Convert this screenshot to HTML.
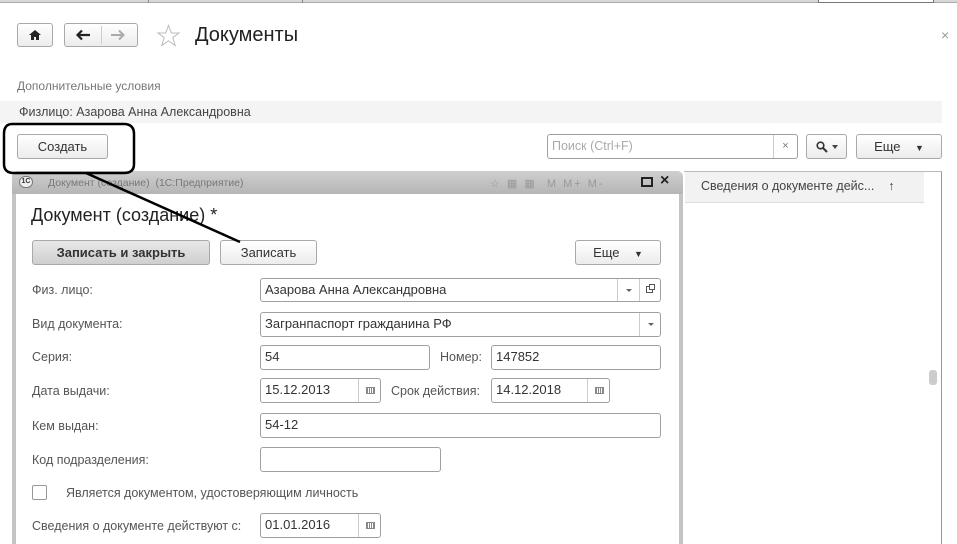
<!DOCTYPE html>
<html><head><meta charset="utf-8">
<style>
*{box-sizing:border-box;margin:0;padding:0}
html{overflow:hidden;width:957px;height:544px}
body{width:957px;height:544px;overflow:hidden;background:#fff;font-family:"Liberation Sans",sans-serif;font-size:12px;color:#333;position:relative}
.a{position:absolute}
.btn{position:absolute;border:1px solid #a9a9a9;border-radius:3px;background:linear-gradient(#fff,#ececec);text-align:center;color:#333;font-size:13px}
.fld{position:absolute;border:1px solid #a0a0a0;border-radius:3px;background:#fff;font-size:13px;color:#333;padding-left:4px;line-height:22px}
.lbl{position:absolute;font-size:12.5px;color:#555}
.sb{position:absolute;top:0;bottom:0;border-left:1px solid #ccc;width:22px}
.cal{position:absolute;width:9px;height:7px;border:1px solid #888;left:7px;top:8px;background:repeating-linear-gradient(90deg,#888 0 1px,#fff 1px 2px)}
.dd{position:absolute;left:8px;top:10px;width:0;height:0;border-left:3px solid transparent;border-right:3px solid transparent;border-top:3px solid #666}
</style></head><body>
<div class="a" style="left:0;top:0;width:957px;height:3px;background:#d8d8d8;border-bottom:1px solid #aaa"></div>
<div class="a" style="left:148px;top:0;width:1px;height:3px;background:#888"></div>
<div class="a" style="left:302px;top:0;width:1px;height:3px;background:#888"></div>
<div class="a" style="left:818px;top:0;width:116px;height:3px;background:#fff;border:1px solid #777;border-top:0"></div>

<div class="btn" style="left:17px;top:23px;width:36px;height:24px"><svg width="14" height="12" viewBox="0 0 14 12" style="margin-top:5px"><path d="M1 6L7 1L13 6H11V11H8V8H6V11H3V6Z" fill="#222"/></svg></div>
<div class="btn" style="left:64px;top:23px;width:74px;height:24px"></div>
<div class="a" style="left:101px;top:26px;width:1px;height:18px;background:#ccc"></div>
<svg class="a" style="left:75px;top:29px" width="16" height="12" viewBox="0 0 16 12"><path d="M15 6H3M7 1.5L2.5 6L7 10.5" fill="none" stroke="#222" stroke-width="2.2"/></svg>
<svg class="a" style="left:110px;top:29px" width="16" height="12" viewBox="0 0 16 12"><path d="M1 6H13M9 1.5L13.5 6L9 10.5" fill="none" stroke="#aaa" stroke-width="2"/></svg>
<svg class="a" style="left:156px;top:24px" width="25" height="24" viewBox="0 0 25 24"><path d="M12.5 1.5L15.3 9H23L16.8 13.6L19.2 21.5L12.5 16.8L5.8 21.5L8.2 13.6L2 9H9.7Z" fill="none" stroke="#bbb" stroke-width="1"/></svg>
<div class="a" style="left:195px;top:24px;font-size:20px;color:#222">Документы</div>
<div class="a" style="left:941px;top:27px;font-size:14px;color:#999">×</div>

<div class="a" style="left:17px;top:79px;font-size:12px;color:#777">Дополнительные условия</div>
<div class="a" style="left:0;top:101px;width:942px;height:22px;background:#f4f4f4"></div>
<div class="a" style="left:19px;top:105px;font-size:12.5px;color:#444">Физлицо: Азарова Анна Александровна</div>

<div class="btn" style="left:17px;top:134px;width:91px;height:25px;line-height:23px">Создать</div>
<div class="fld" style="left:547px;top:134px;width:251px;height:25px;color:#aaa;font-size:12.5px">Поиск (Ctrl+F)<div class="sb" style="right:0;left:auto;color:#777;text-align:center;font-size:11px;width:24px">×</div></div>
<div class="btn" style="left:806px;top:134px;width:41px;height:25px"><svg class="a" style="left:9px;top:6px" width="12" height="12" viewBox="0 0 12 12"><circle cx="4.5" cy="4.5" r="3.3" fill="none" stroke="#333" stroke-width="1.6"/><path d="M7 7L11 11" stroke="#333" stroke-width="2"/></svg><div class="a" style="left:25px;top:10px;border-left:3.5px solid transparent;border-right:3.5px solid transparent;border-top:4px solid #444"></div></div>
<div class="btn" style="left:856px;top:134px;width:86px;height:25px;line-height:23px">Еще &nbsp;&nbsp;&nbsp;<span style="font-size:9px">▼</span></div>

<!-- right panel -->
<div class="a" style="left:684px;top:171px;width:258px;height:373px;border-right:1px solid #999;border-top:1px solid #bbb;background:#fff"></div>
<div class="a" style="left:685px;top:172px;width:239px;height:31px;background:#f2f2f2;border-bottom:1px solid #ddd"></div>
<div class="a" style="left:701px;top:179px;font-size:12.5px;color:#444">Сведения о документе дейс...&nbsp;&nbsp;&nbsp;&nbsp;↑</div>
<div class="a" style="left:929px;top:370px;width:8px;height:15px;background:#ccc;border-radius:3px"></div>

<!-- dialog -->
<div class="a" style="left:12px;top:171px;width:671px;height:373px;background:#fff;border:4px solid #c4c4c4;border-top:0;border-bottom:0;border-radius:6px 6px 0 0"></div>
<div class="a" style="left:12px;top:171px;width:671px;height:23px;background:linear-gradient(#cfcfcf,#b5b5b5);border-radius:6px 6px 0 0"></div>
<div class="a" style="left:19px;top:176px;width:14px;height:12px;border-radius:6px;background:#eee;border:1px solid #777;font-size:7px;line-height:10px;text-align:center;font-weight:bold">1С</div>
<div class="a" style="left:48px;top:177px;font-size:10.5px;color:#777">Документ (создание) &nbsp;(1С:Предприятие)</div>
<div class="a" style="left:490px;top:177px;font-size:11px;color:#999;letter-spacing:2px">☆ ▦ ▦ &nbsp;M M+ M-</div>
<div class="a" style="left:641px;top:177px;width:12px;height:10px;border:2px solid #222;border-top-width:2px"></div>
<div class="a" style="left:660px;top:172px;font-size:16px;font-weight:bold;color:#222">×</div>

<div class="a" style="left:31px;top:205px;font-size:18px;color:#222">Документ (создание) *</div>
<div class="btn" style="left:32px;top:240px;width:178px;height:25px;line-height:23px;font-weight:bold;background:linear-gradient(#e8e8e8,#cfcfcf);color:#333">Записать и закрыть</div>
<div class="btn" style="left:220px;top:240px;width:97px;height:25px;line-height:23px">Записать</div>
<div class="btn" style="left:575px;top:240px;width:86px;height:25px;line-height:23px">Еще &nbsp;&nbsp;&nbsp;<span style="font-size:9px">▼</span></div>

<div class="lbl" style="left:32px;top:283px">Физ. лицо:</div>
<div class="fld" style="left:260px;top:278px;width:401px;height:24px">Азарова Анна Александровна<div class="sb" style="left:356px"><div class="dd"></div></div><div class="sb" style="left:378px"><div class="a" style="left:6px;top:7px;width:7px;height:7px;border:1px solid #555"></div><div class="a" style="left:9px;top:5px;width:6px;height:6px;border:1px solid #555;background:#fff"></div></div></div>
<div class="lbl" style="left:32px;top:317px">Вид документа:</div>
<div class="fld" style="left:260px;top:312px;width:401px;height:25px">Загранпаспорт гражданина РФ<div class="sb" style="left:378px"><div class="dd"></div></div></div>
<div class="lbl" style="left:32px;top:350px">Серия:</div>
<div class="fld" style="left:260px;top:345px;width:170px;height:25px">54</div>
<div class="lbl" style="left:440px;top:350px">Номер:</div>
<div class="fld" style="left:491px;top:345px;width:170px;height:25px">147852</div>
<div class="lbl" style="left:32px;top:384px">Дата выдачи:</div>
<div class="fld" style="left:260px;top:378px;width:121px;height:25px">15.12.2013<div class="sb" style="left:97px"><div class="cal"></div></div></div>
<div class="lbl" style="left:391px;top:384px">Срок действия:</div>
<div class="fld" style="left:491px;top:378px;width:119px;height:25px">14.12.2018<div class="sb" style="left:95px"><div class="cal"></div></div></div>
<div class="lbl" style="left:32px;top:419px">Кем выдан:</div>
<div class="fld" style="left:260px;top:413px;width:401px;height:25px">54-12</div>
<div class="lbl" style="left:32px;top:453px">Код подразделения:</div>
<div class="fld" style="left:260px;top:447px;width:181px;height:25px"></div>
<div class="a" style="left:32px;top:485px;width:15px;height:15px;border:1px solid #999;border-radius:2px"></div>
<div class="lbl" style="left:66px;top:486px">Является документом, удостоверяющим личность</div>
<div class="lbl" style="left:32px;top:519px">Сведения о документе действуют с:</div>
<div class="fld" style="left:260px;top:513px;width:121px;height:25px">01.01.2016<div class="sb" style="left:97px"><div class="cal"></div></div></div>

<svg class="a" style="left:0;top:0" width="957" height="544">
<path d="M12 124 Q4 124 4 134 L4 164 Q4 173 14 173 L124 173 Q134 173 134 164 L134 134 Q134 124 124 124 Z" fill="none" stroke="#000" stroke-width="2.5"/>
<line x1="86" y1="173" x2="240" y2="242" stroke="#000" stroke-width="2.5"/>
</svg>
</body></html>
